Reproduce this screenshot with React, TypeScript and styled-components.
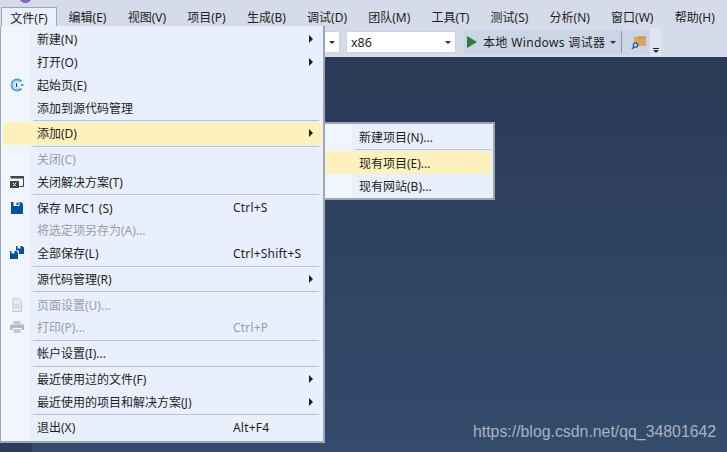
import styled, { createGlobalStyle } from 'styled-components'

const UI_FONT = '"Noto Sans", "Noto Sans CJK SC", sans-serif'

const GlobalStyle = createGlobalStyle`
  html, body {
    margin: 0;
    padding: 0;
    width: 727px;
    height: 452px;
    overflow: hidden;
    background: #2b3b58;
  }
  * {
    box-sizing: border-box;
  }
`

type MenuEntry =
  | { kind: 'sep' }
  | {
      kind?: 'item'
      label: string
      shortcut?: string
      arrow?: boolean
      disabled?: boolean
      active?: boolean
      icon?: 'start' | 'closeSolution' | 'save' | 'saveAll' | 'page' | 'print'
    }

const FILE_MENU: MenuEntry[] = [
  { label: '新建(N)', arrow: true },
  { label: '打开(O)', arrow: true },
  { label: '起始页(E)', icon: 'start' },
  { label: '添加到源代码管理' },
  { kind: 'sep' },
  { label: '添加(D)', arrow: true, active: true },
  { kind: 'sep' },
  { label: '关闭(C)', disabled: true },
  { label: '关闭解决方案(T)', icon: 'closeSolution' },
  { kind: 'sep' },
  { label: '保存 MFC1 (S)', shortcut: 'Ctrl+S', icon: 'save' },
  { label: '将选定项另存为(A)...', disabled: true },
  { label: '全部保存(L)', shortcut: 'Ctrl+Shift+S', icon: 'saveAll' },
  { kind: 'sep' },
  { label: '源代码管理(R)', arrow: true },
  { kind: 'sep' },
  { label: '页面设置(U)...', disabled: true, icon: 'page' },
  { label: '打印(P)...', shortcut: 'Ctrl+P', disabled: true, icon: 'print' },
  { kind: 'sep' },
  { label: '帐户设置(I)...' },
  { kind: 'sep' },
  { label: '最近使用过的文件(F)', arrow: true },
  { label: '最近使用的项目和解决方案(J)', arrow: true },
  { kind: 'sep' },
  { label: '退出(X)', shortcut: 'Alt+F4' },
]

const ADD_MENU: MenuEntry[] = [
  { label: '新建项目(N)...' },
  { kind: 'sep' },
  { label: '现有项目(E)...', active: true },
  { label: '现有网站(B)...' },
]

const MENU_TITLES = ['编辑(E)', '视图(V)', '项目(P)', '生成(B)', '调试(D)', '团队(M)', '工具(T)', '测试(S)', '分析(N)', '窗口(W)', '帮助(H)']

const Shell = styled.div`
  position: relative;
  width: 727px;
  height: 452px;
  display: flex;
  flex-direction: column;
  overflow: hidden;
  font-family: ${UI_FONT};
  font-size: 12px;
  color: #1e1e1e;
`

const MenuBar = styled.div`
  height: 27px;
  flex: none;
  display: flex;
  align-items: flex-end;
  padding-left: 1px;
  background: #d6dbe9;
`

const OpenTitle = styled.div`
  width: 56px;
  height: 20px;
  margin-right: 1px;
  display: flex;
  align-items: center;
  justify-content: center;
  background: #eaf0fd;
  border: 1px solid #9ba7b7;
  border-bottom: none;
`

const MenuTitle = styled.div`
  height: 20px;
  padding: 0 10.6px;
  display: flex;
  align-items: center;
  white-space: nowrap;
`

const LogoHint = styled.div`
  position: absolute;
  left: 20px;
  top: -5px;
  width: 11px;
  height: 8px;
  border-radius: 50%;
  background: #8a63c9;
`

const Toolbar = styled.div`
  height: 30px;
  flex: none;
  display: flex;
  align-items: center;
  padding-left: 300px;
  background: #d6dbe9;
`

const Combo = styled.div<{ $width: number }>`
  width: ${({ $width }) => $width}px;
  height: 22px;
  margin-right: 6px;
  padding: 0 4px 0 4px;
  display: flex;
  align-items: center;
  justify-content: space-between;
  background: #ffffff;
  border: 1px solid #cbd2e0;
  font-size: 12.5px;
`

const DownCaret = styled.span`
  width: 0;
  height: 0;
  border-left: 3.5px solid transparent;
  border-right: 3.5px solid transparent;
  border-top: 3.5px solid #2b2f36;
`

const RunGroup = styled.div`
  width: 186px;
  height: 25px;
  margin-left: 2px;
  display: flex;
  align-items: center;
  padding-left: 3px;
  background: #ccd5e6;
`

const RunLabel = styled.span`
  margin-left: 6px;
  letter-spacing: 0.35px;
  white-space: nowrap;
`

const CaretGap = styled.span`
  margin: 0 5px 0 5px;
  display: flex;
`

const ToolSeparator = styled.span`
  width: 1px;
  height: 22px;
  margin-right: 9px;
  background: #8f98a8;
`

const Overflow = styled.div`
  width: 11px;
  height: 28px;
  padding-bottom: 3px;
  display: flex;
  flex-direction: column;
  align-items: center;
  justify-content: flex-end;
  gap: 1px;
  background: #dfe4f0;
`

const OverflowBar = styled.span`
  width: 6px;
  height: 1px;
  background: #1e1e1e;
`

const Workspace = styled.div`
  flex: 1;
  display: flex;
  background: linear-gradient(180deg, #2a3a57 0%, #354b6c 100%);
`

const DockStrip = styled.div`
  width: 32px;
  background: #2b3b58;
`

const Watermark = styled.div`
  position: absolute;
  left: 473px;
  top: 423px;
  font-family: "Liberation Sans", Arial, sans-serif;
  font-size: 15.85px;
  line-height: 18px;
  color: #a7b2c3;
  white-space: nowrap;
`

const Panel = styled.div<{ $left: number; $top: number; $width: number; $iconWidth: number }>`
  position: absolute;
  left: ${({ $left }) => $left}px;
  top: ${({ $top }) => $top}px;
  width: ${({ $width }) => $width}px;
  padding: 2px;
  border: 1px solid #9ba7b7;
  background: linear-gradient(
    90deg,
    #f1f5fe 0,
    #f1f5fe ${({ $iconWidth }) => $iconWidth}px,
    #e9effd ${({ $iconWidth }) => $iconWidth}px
  );
`

const FilePanel = styled(Panel)`
  border-top: none;
  border-left-width: 1px;
  border-right-width: 2px;
  border-bottom-width: 2px;
  padding: 2px 1px 2px 2px;
`

const SubPanel = styled(Panel)`
  border-width: 2px;
  padding: 1px 2px 1px 0;
`

const Row = styled.div<{ $active?: boolean; $disabled?: boolean; $height: number; $textLeft: number }>`
  position: relative;
  height: ${({ $height }) => $height}px;
  display: flex;
  align-items: center;
  padding-left: ${({ $textLeft }) => $textLeft}px;
  white-space: nowrap;
  background: ${({ $active }) => ($active ? '#fdf2be' : 'transparent')};
  color: ${({ $disabled }) => ($disabled ? '#9a9da3' : '#1e1e1e')};
`

const Separator = styled.div<{ $left: number; $right: number }>`
  height: 1px;
  margin: 1px ${({ $right }) => $right}px 1px ${({ $left }) => $left}px;
  background: #bcc3d3;
`

const IconSlot = styled.span`
  position: absolute;
  left: 7px;
  top: 50%;
  transform: translateY(-50%);
  width: 14px;
  height: 14px;
  display: flex;
`

const Shortcut = styled.span`
  position: absolute;
  left: 230px;
  letter-spacing: 0.2px;
`

const ArrowRight = styled.span`
  position: absolute;
  right: 9px;
  top: 50%;
  margin-top: -4px;
  width: 0;
  height: 0;
  border-top: 4px solid transparent;
  border-bottom: 4px solid transparent;
  border-left: 4px solid #1e1e1e;
`

function MenuIcon({ name }: { name: string }) {
  switch (name) {
    case 'start':
      return (
        <svg width="14" height="14" viewBox="0 0 14 14">
          <path d="M11.4 3.6A5.500 5.500 0 1 0 11.4 10.400" fill="none" stroke="#35a3ea" strokeWidth="1.800" />
          <path d="M10 5.200A3.400 3.400 0 1 0 10 8.800" fill="none" stroke="#86cbf3" strokeWidth="1" />
          <path d="M11 6h2.500v2H11z" fill="#35a3ea" />
          <path d="M6 5.400 7.200 4.900v4.100H6z" fill="#333" />
        </svg>
      )
    case 'closeSolution':
      return (
        <svg width="14" height="14" viewBox="0 0 14 14">
          <path d="M.5 1.5h13v10H9.5" fill="none" stroke="#424242" />
          <path d="M.5 1.5h13v2H.5z" fill="#424242" />
          <path d="M0 6h9v7H0z" fill="#424242" />
          <path d="M2.8 7.8 6.2 11.2M6.2 7.8 2.8 11.2" stroke="#e9effd" />
        </svg>
      )
    case 'save':
      return (
        <svg width="14" height="14" viewBox="0 0 14 14">
          <path d="M1 1h2.5v4h6V1H11l2 2v10H1z" fill="#00539c" />
          <path d="M6.5 1.5h2v2.5h-2z" fill="#00539c" />
        </svg>
      )
    case 'saveAll':
      return (
        <svg width="14" height="14" viewBox="0 0 14 14">
          <path d="M6 0h1.500v2.500h3V0H12l2 1.500V8H9V4.500H6z" fill="#00539c" />
          <path d="M0 5h1.500v2.500h3V5H6l2 1.500V13H0z" fill="#00539c" />
        </svg>
      )
    case 'page':
      return (
        <svg width="14" height="14" viewBox="0 0 14 14">
          <path d="M3 .5h5.500L11.500 3.500V13.500H3z" fill="#e6eaf2" stroke="#c4c8cf" />
          <path d="M5 7h4.500M5 9.500h4.500" stroke="#c4c8cf" />
        </svg>
      )
    case 'print':
      return (
        <svg width="14" height="14" viewBox="0 0 14 14">
          <path d="M3.500 1h7v3h-7z" fill="#c4c8cf" />
          <path d="M0 4.500h14V10h-2.500V8h-9v2H0z" fill="#b4b8c0" />
          <path d="M3.500 9h7v4h-7z" fill="#c4c8cf" />
        </svg>
      )
    default:
      return null
  }
}

function MenuRows({
  entries,
  height,
  textLeft,
  sepLeft,
  sepRight,
}: {
  entries: MenuEntry[]
  height: number
  textLeft: number
  sepLeft: number
  sepRight: number
}) {
  return (
    <>
      {entries.map((entry, index) => {
        if (entry.kind === 'sep') {
          return <Separator key={index} $left={sepLeft} $right={sepRight} />
        }
        return (
          <Row key={index} $active={entry.active} $disabled={entry.disabled} $height={height} $textLeft={textLeft}>
            {entry.icon && (
              <IconSlot>
                <MenuIcon name={entry.icon} />
              </IconSlot>
            )}
            {entry.label}
            {entry.shortcut && <Shortcut>{entry.shortcut}</Shortcut>}
            {entry.arrow && <ArrowRight />}
          </Row>
        )
      })}
    </>
  )
}

export default function App() {
  return (
    <Shell>
      <GlobalStyle />
      <LogoHint />
      <MenuBar>
        <OpenTitle>文件(F)</OpenTitle>
        {MENU_TITLES.map((title) => (
          <MenuTitle key={title}>{title}</MenuTitle>
        ))}
      </MenuBar>
      <Toolbar>
        <Combo $width={40}>
          <span />
          <DownCaret />
        </Combo>
        <Combo $width={110}>
          x86
          <DownCaret />
        </Combo>
        <RunGroup>
          <svg width="10" height="12" viewBox="0 0 10 12">
            <path d="M0 0 10 6 0 12z" fill="#2f7d32" />
          </svg>
          <RunLabel>本地 Windows 调试器</RunLabel>
          <CaretGap>
            <DownCaret />
          </CaretGap>
          <ToolSeparator />
          <svg width="16" height="16" viewBox="0 0 16 16">
            <path d="M3 3h3l2-1h7v10H3z" fill="#d8a65c" />
            <path d="M6 4h8" stroke="#c08e46" />
            <circle cx="4.500" cy="11" r="2.200" fill="#ccd5e6" stroke="#1f5fa8" strokeWidth="1.300" />
            <path d="M3 12.800 1 15" stroke="#1f5fa8" strokeWidth="1.500" />
          </svg>
        </RunGroup>
        <Overflow>
          <OverflowBar />
          <DownCaret />
        </Overflow>
      </Toolbar>
      <Workspace>
        <DockStrip />
      </Workspace>
      <FilePanel $left={0} $top={26} $width={325} $iconWidth={28}>
        <MenuRows entries={FILE_MENU} height={22.75} textLeft={34} sepLeft={30} sepRight={3} />
      </FilePanel>
      <SubPanel $left={323} $top={122} $width={172} $iconWidth={27}>
        <MenuRows entries={ADD_MENU} height={23} textLeft={34} sepLeft={30} sepRight={0} />
      </SubPanel>
      <Watermark>https://blog.csdn.net/qq_34801642</Watermark>
    </Shell>
  )
}
